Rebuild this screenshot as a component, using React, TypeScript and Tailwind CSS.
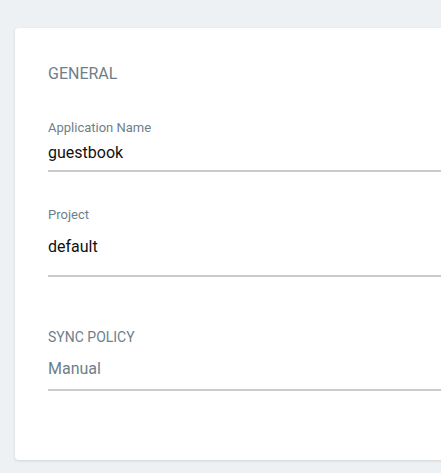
import * as React from "react"

const labelCls = "block text-[13px] leading-[16px] text-[#6d7f8b]"
const lineCls = "h-[2px] bg-[#c9cbcd]"

export default function App() {
    return (
        <div className="min-h-screen overflow-hidden bg-[#eef1f4] pl-[15px] pt-[28px] font-['Roboto',sans-serif]">
            <div className="h-[432px] w-[700px] rounded-[4px] bg-white pl-[33px] pt-[36px] shadow-[0_1px_3px_rgba(0,0,0,0.12)]">
                <div className="text-[16px] leading-[20px] text-[#6d7f8b]">GENERAL</div>

                {/* Application name */}
                <div className="mt-[36px]">
                    <label className={labelCls}>Application Name</label>
                    <div className="mt-[7px] pb-[7px] text-[16px] leading-[20px] text-[#111]">guestbook</div>
                    <div className={lineCls} />
                </div>

                {/* Project */}
                <div className="mt-[35px]">
                    <label className={labelCls}>Project</label>
                    <div className="mt-[14px] pb-[18px] text-[16px] leading-[20px] text-[#111]">default</div>
                    <div className={lineCls} />
                </div>

                {/* Sync policy */}
                <div className="mt-[52px]">
                    <div className="text-[14px] leading-[16px] text-[#6d7f8b]">SYNC POLICY</div>
                    <div className="mt-[14px] pb-[10px] text-[16px] leading-[20px] text-[#6d7f8b]">Manual</div>
                    <div className={lineCls} />
                </div>
            </div>
        </div>
    )
}
